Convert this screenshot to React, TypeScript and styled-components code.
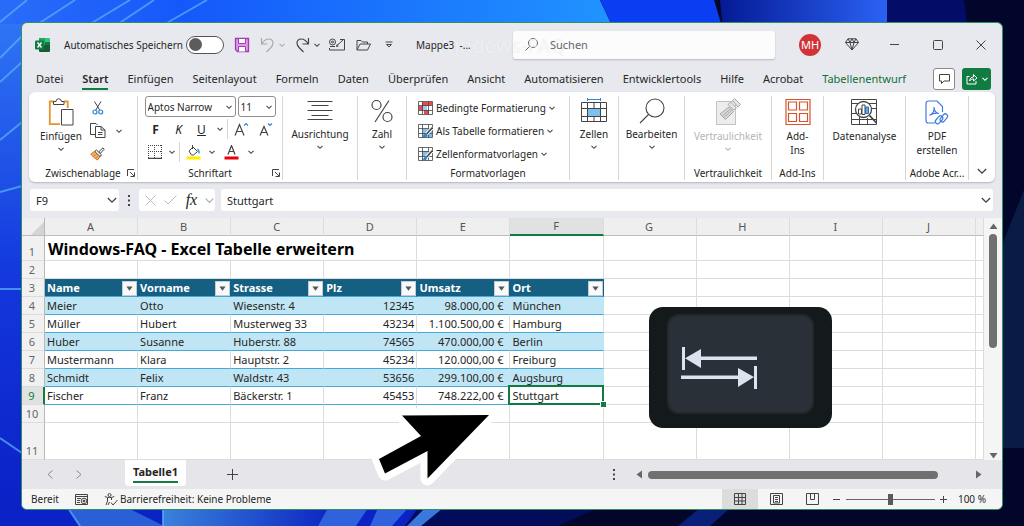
import React from "react";
import styled, { createGlobalStyle, css } from "styled-components";

const Global = createGlobalStyle`
  *, *::before, *::after { box-sizing: border-box; }
  body {
    margin: 0;
    background: #050c50;
    font-family: "Noto Sans", "Open Sans", sans-serif;
    font-size: 11px;
    color: #262626;
  }
  button, input, select {
    font: inherit;
    color: inherit;
    margin: 0;
    padding: 0;
    border: 0;
    background: none;
  }
  button { white-space: nowrap; }
  svg { display: block; flex: none; }
`;

const Desktop = styled.main`
  position: relative;
  min-height: 100vh;
  padding: 22px 21px 16px;
  overflow: hidden;
`;

const WallpaperArt = styled.svg`
  position: absolute;
  inset: 0;
  width: 100%;
  height: 100%;
`;

const Window = styled.div`
  position: relative;
  display: flex;
  flex-direction: column;
  border: 1px solid #2f8f62;
  border-radius: 6px;
  background: #e8e9ee;
  overflow: hidden;
`;

/* Title bar */

const TitleBar = styled.header`
  display: flex;
  align-items: center;
  height: 43px;
  padding-left: 13px;
`;

const QuickAccess = styled.div`
  display: flex;
  align-items: center;
  width: 478px;
`;

const AutoSave = styled.label`
  display: flex;
  align-items: center;
  justify-content: space-between;
  width: 160px;
  margin: 0 10px 0 13px;
  font-size: 10px;
  white-space: nowrap;
`;

const Toggle = styled.input`
  appearance: none;
  display: flex;
  align-items: center;
  width: 38px;
  height: 18px;
  padding: 0 2px;
  border: 1px solid #555;
  border-radius: 9px;
  background: #fff;
  &::before {
    content: "";
    width: 13px;
    height: 13px;
    border-radius: 50%;
    background: #5c5c5c;
  }
  &:checked { justify-content: flex-end; }
`;

const IconButton = styled.button<{ $w?: number; $h?: number }>`
  display: flex;
  align-items: center;
  justify-content: center;
  flex: none;
  width: ${(p) => p.$w ?? 16}px;
  height: ${(p) => p.$h ?? 18}px;
`;

const HistoryButtons = styled.div`
  display: flex;
  margin-left: 8px;
`;

const FileName = styled.span`
  position: relative;
  z-index: 1;
  margin-left: 14px;
  font-size: 10px;
  white-space: pre;
`;

const Watermark = styled.span`
  position: absolute;
  left: 414px;
  top: 9px;
  font-size: 20px;
  line-height: 28px;
  color: rgba(255, 255, 255, 0.55);
  text-shadow: 0 0 1px rgba(170, 175, 185, 0.25);
  pointer-events: none;
`;

const SearchBox = styled.label`
  display: flex;
  flex: 1;
  align-items: center;
  gap: 12px;
  height: 28px;
  margin-right: 14px;
  padding-left: 12px;
  border-radius: 3px;
  background: #fcfcfd;
  box-shadow: 0 1px 2px #b9bbc0;
  input {
    position: relative;
    z-index: 1;
    flex: 1;
    min-width: 0;
    outline: none;
    &::placeholder { color: #666; opacity: 1; }
  }
`;

const Avatar = styled.span`
  display: flex;
  align-items: center;
  justify-content: center;
  width: 22px;
  height: 22px;
  border-radius: 50%;
  background: #d13438;
  color: #fff;
`;

/* Ribbon tabs */

const TabBar = styled.nav`
  display: flex;
  align-items: center;
  height: 26px;
  padding: 0 11px 0 14px;
`;

const Tabs = styled.div`
  display: flex;
  flex: 1;
  gap: 19px;
`;

const RibbonTab = styled.button<{ $active?: boolean; $context?: boolean }>`
  height: 22px;
  padding-top: 1px;
  line-height: 19px;
  border-bottom: 2px solid transparent;
  ${(p) => p.$active && css`font-weight: 600; border-color: #107c41;`}
  ${(p) => p.$context && css`color: #0f703b;`}
`;

const CommentButton = styled(IconButton)`
  border: 1px solid #8a8a8a;
  border-radius: 3px;
  background: #fff;
`;

const ShareButton = styled(IconButton)`
  gap: 4px;
  margin-left: 7px;
  border-radius: 3px;
  background: #107c41;
  color: #fff;
`;

/* Ribbon body */

const Ribbon = styled.section`
  display: flex;
  height: 90px;
  margin: 0 7px;
  padding: 4px 0 2px;
  border-radius: 6px;
  background: #fff;
  box-shadow: 0 1px 2px #b4b6ba;
  font-size: 10px;
`;

const Group = styled.div<{ $w: number }>`
  display: flex;
  flex-direction: column;
  flex: none;
  width: ${(p) => p.$w}px;
  border-right: 1px solid #d6d6d6;
`;

const GroupBody = styled.div<{ $gap?: number; $start?: boolean }>`
  display: flex;
  flex: 1;
  align-items: flex-start;
  justify-content: ${(p) => (p.$start ? "flex-start" : "center")};
  gap: ${(p) => p.$gap ?? 0}px;
  padding-left: ${(p) => (p.$start ? 11 : 0)}px;
`;

const GroupLabel = styled.div`
  position: relative;
  height: 14px;
  line-height: 14px;
  text-align: center;
  white-space: nowrap;
`;

const Launcher = styled.button`
  position: absolute;
  right: 2px;
  top: 3px;
`;

const BigButton = styled.button<{ $muted?: boolean }>`
  display: flex;
  flex-direction: column;
  align-items: center;
  gap: 3px;
  height: 64px;
  padding-top: 2px;
  line-height: 14px;
  color: ${(p) => (p.$muted ? "#b4b4b4" : "inherit")};
`;

const Stack = styled.div<{ $gap?: number }>`
  display: flex;
  flex-direction: column;
  gap: ${(p) => p.$gap ?? 0}px;
`;

const Row = styled.div<{ $gap?: number }>`
  display: flex;
  align-items: center;
  gap: ${(p) => p.$gap ?? 0}px;
`;

const SelectFrame = styled.label<{ $w: number }>`
  display: flex;
  align-items: center;
  width: ${(p) => p.$w}px;
  height: 21px;
  padding: 0 3px 0 2px;
  border: 1px solid #8f8f8f;
  border-radius: 3px;
  select {
    appearance: none;
    flex: 1;
    min-width: 0;
    outline: none;
  }
`;

const GlyphButton = styled(IconButton)<{ $kind?: "bold" | "italic" | "underline" }>`
  font-size: 12px;
  ${(p) => p.$kind === "bold" && css`font-weight: 700;`}
  ${(p) => p.$kind === "italic" && css`font-style: italic;`}
  ${(p) => p.$kind === "underline" && css`text-decoration: underline;`}
`;

const ThinRule = styled.span`
  width: 1px;
  height: 20px;
  background: #d6d6d6;
`;

const StyleButton = styled.button`
  display: flex;
  align-items: center;
  gap: 3px;
  height: 23px;
`;

const RibbonEnd = styled.div`
  display: flex;
  flex: 1;
  align-items: flex-end;
  justify-content: center;
`;

/* Formula bar */

const FormulaBar = styled.div`
  display: flex;
  align-items: center;
  height: 36px;
  padding: 0 9px 0 8px;
`;

const Field = styled.label<{ $w?: number }>`
  display: flex;
  align-items: center;
  flex: ${(p) => (p.$w ? "none" : 1)};
  width: ${(p) => (p.$w ? `${p.$w}px` : "auto")};
  height: 22px;
  padding: 0 2px 0 6px;
  border-radius: 3px;
  background: #fff;
  input {
    flex: 1;
    min-width: 0;
    outline: none;
  }
`;

const FormulaTools = styled.div`
  display: flex;
  align-items: center;
  justify-content: space-between;
  width: 76px;
  height: 22px;
  margin-right: 6px;
  padding: 0 1px 0 5px;
  border-radius: 3px;
  background: #fff;
`;

const FxButton = styled.button`
  font-family: "Liberation Serif", serif;
  font-size: 16px;
  font-style: italic;
  line-height: 16px;
`;

/* Sheet */

const SheetArea = styled.div`
  position: relative;
  display: flex;
  background: #f5f5f5;
`;

const Grid = styled.table`
  flex: 1;
  width: 0;
  table-layout: fixed;
  border-collapse: separate;
  border-spacing: 0;
  background: #fff;
  th, td {
    padding: 1px 3px 0 2px;
    overflow: hidden;
    white-space: nowrap;
    line-height: 16px;
    font-weight: 400;
    text-align: left;
    border-right: 1px solid #dcdcdc;
    border-bottom: 1px solid #dcdcdc;
  }
`;

const Line = styled.tr<{ $h: number }>`
  height: ${(p) => p.$h}px;
`;

const ColumnHead = styled.th<{ $active?: boolean }>`
  && {
    padding-top: 0;
    text-align: center;
    color: #555;
    background: ${(p) => (p.$active ? "#dfe2e0" : "#efefef")};
    border-bottom: ${(p) => (p.$active ? "2px solid #107c41" : "1px solid #bdbdbd")};
  }
`;

const RowHead = styled.th<{ $active?: boolean }>`
  && {
    padding: 0 2px 0 0;
    text-align: center;
    vertical-align: bottom;
    color: ${(p) => (p.$active ? "#107c41" : "#666")};
    background: ${(p) => (p.$active ? "#e0e2e1" : "#f1f1f1")};
    border-right: ${(p) => (p.$active ? "2px solid #107c41" : "1px solid #b8b8b8")};
  }
`;

const Corner = styled.th`
  && {
    background: linear-gradient(135deg, #efefef 66%, #d4d4d4 67%);
    border-right-color: #b8b8b8;
    border-bottom-color: #bdbdbd;
  }
`;

const SheetTitle = styled.td`
  && {
    padding-left: 3px;
    font-size: 16px;
    font-weight: 700;
    line-height: 22px;
    color: #000;
  }
`;

const FieldHead = styled.th`
  && {
    padding-right: 0;
    color: #fff;
    font-weight: 700;
    background: #156082;
    border-right-color: #156082;
    border-bottom-color: #45a9d8;
  }
  > div {
    display: flex;
    align-items: center;
    justify-content: space-between;
  }
`;

const FilterButton = styled.button`
  display: flex;
  align-items: center;
  justify-content: center;
  width: 15px;
  height: 15px;
  border: 1px solid #c4ccd0;
  background: #f8f9fa;
  color: #555;
`;

const Data = styled.td<{ $band?: boolean; $num?: boolean; $money?: boolean; $selected?: boolean }>`
  && {
    padding-right: ${(p) => (p.$money ? 6 : 2)}px;
    text-align: ${(p) => (p.$num || p.$money ? "right" : "left")};
    border-bottom-color: #45a9d8;
    ${(p) => p.$band && css`background: #c0e6f5; border-right-color: #c0e6f5;`}
    ${(p) => p.$selected && css`position: relative; overflow: visible;`}
  }
  &::before {
    content: ${(p) => (p.$selected ? '""' : "none")};
    position: absolute;
    inset: -2px -1px -1px -2px;
    border: 2px solid #107c41;
  }
  &::after {
    content: ${(p) => (p.$selected ? '""' : "none")};
    position: absolute;
    right: -3px;
    bottom: -3px;
    width: 5px;
    height: 5px;
    background: #107c41;
    outline: 1px solid #fff;
  }
`;

const VerticalScroll = styled.div`
  display: flex;
  flex-direction: column;
  align-items: center;
  width: 18px;
  padding: 4px 0 0;
  color: #666;
`;

const VerticalThumb = styled.span`
  flex: none;
  width: 8px;
  height: 48%;
  margin: 3px 0 auto;
  border-radius: 4px;
  background: #707070;
`;

const KeyCap = styled.div`
  position: absolute;
  left: 627px;
  top: 89px;
  width: 183px;
  height: 121px;
  padding: 7px 18px 14px;
  border-radius: 14px;
  background: #14191c;
`;

const KeyFace = styled.div`
  display: flex;
  align-items: center;
  height: 100%;
  padding: 7px 0 0 12px;
  border: 2px solid #22282e;
  border-radius: 12px;
  background: #2a3038;
`;

const PointerArt = styled.svg`
  position: absolute;
  left: 348px;
  top: 187px;
  pointer-events: none;
`;

/* Bottom bars */

const SheetTabs = styled.div`
  display: flex;
  align-items: center;
  height: 29px;
  padding: 0 19px 0 21px;
  background: #e6e6ea;
`;

const SheetNav = styled.div`
  display: flex;
  gap: 15px;
`;

const SheetTab = styled.button`
  align-self: flex-start;
  height: 26px;
  width: 61px;
  margin: 0 38px 0 39px;
  border-radius: 0 0 4px 4px;
  background: #fff;
  font-weight: 700;
  span {
    display: inline-block;
    line-height: 18px;
    border-bottom: 2px solid #107c41;
  }
`;

const HorizontalScroll = styled.div`
  display: flex;
  align-items: center;
  gap: 4px;
  width: 37%;
  margin-left: 20px;
  color: #666;
`;

const HorizontalTrack = styled.span`
  display: flex;
  flex: 1;
  height: 8px;
  &::before {
    content: "";
    width: 90%;
    border-radius: 4px;
    background: #707070;
  }
`;

const StatusBar = styled.footer`
  display: flex;
  align-items: center;
  height: 20px;
  padding: 0 16px 0 9px;
  background: #f5f5f5;
  font-size: 10px;
`;

const Spacer = styled.span`
  flex: 1;
`;

const StatusItem = styled.button`
  display: flex;
  align-items: center;
  gap: 2px;
  margin-left: 16px;
`;

const ViewButton = styled(IconButton)<{ $active?: boolean }>`
  background: ${(p) => (p.$active ? "#dcdcdc" : "transparent")};
`;

const ZoomSlider = styled.input`
  appearance: none;
  width: 89px;
  height: 11px;
  margin: 0 4px;
  background: linear-gradient(#666, #666) center / 100% 1px no-repeat;
  &::-webkit-slider-thumb {
    appearance: none;
    width: 5px;
    height: 11px;
    background: #5a5a5a;
  }
`;

const ZoomValue = styled.span`
  width: 39px;
  text-align: right;
  white-space: nowrap;
`;

/* Icons */

type ArtProps = { w: number; h: number; box?: string; children: React.ReactNode };
const Art = ({ w, h, box, children }: ArtProps) => (
  <svg width={w} height={h} viewBox={box ?? `0 0 ${w} ${h}`} fill="none" stroke="#444" strokeWidth="1" aria-hidden="true">
    {children}
  </svg>
);

const Chevron = ({ size = 6, color = "#444" }: { size?: number; color?: string }) => (
  <Art w={size} h={size} box="0 0 6 6">
    <path d="M.5 1.8 3 4.300 5.500 1.800" stroke={color} strokeWidth={size > 7 ? 0.8 : 1.1} />
  </Art>
);

const Triangle = ({ turn = 0, w = 9 }: { turn?: number; w?: number }) => (
  <svg width={w} height={w} viewBox="0 0 9 9" aria-hidden="true">
    <path d="M.5 2h8L4.500 7.500z" fill="currentColor" transform={`rotate(${turn} 4.500 4.500)`} />
  </svg>
);

const ExcelLogo = () => (
  <Art w={16} h={16}>
    <g stroke="none">
      <path d="M4 1h6v7H4z" fill="#21a366" />
      <path d="M10 1h4a1 1 0 0 1 1 1v3h-5z" fill="#33c481" />
      <path d="M10 5h5v3.500h-5z" fill="#107c41" />
      <path d="M4 8h11v6a1 1 0 0 1-1 1H5a1 1 0 0 1-1-1z" fill="#185c37" />
      <rect x="0" y="3.500" width="9" height="9" rx="1" fill="#107c41" />
    </g>
    <path d="m2.500 5.500 4 5m0-5-4 5" stroke="#fff" strokeWidth="1.400" />
  </Art>
);

const SaveIcon = () => (
  <Art w={16} h={16}>
    <path d="M1.500 1.500h13v13h-11l-2-2z" fill="#dc9be6" stroke="#a33bb5" strokeWidth="1.300" />
    <path d="M4.500 1.500h7v5h-7zM4.500 14.500v-5h7v5" fill="#fff" stroke="#a33bb5" />
  </Art>
);

const UndoIcon = ({ flip, color }: { flip?: boolean; color: string }) => (
  <Art w={14} h={16}>
    <g transform={flip ? "matrix(-1 0 0 1 14 0)" : undefined} stroke={color} strokeWidth="1.200">
      <path d="M1.500 1v6h6M1.800 6.800C4 3.500 6 2 8.500 2c3 0 4.500 2 4.500 4.300 0 2-1 3.200-2.500 4.700L6.500 15" />
    </g>
  </Art>
);

const MailIcon = () => (
  <Art w={16} h={14}>
    <path d="M11 1.500h4.500v10.500H.5v-2" />
    <circle cx="3.500" cy="4" r="3" />
    <circle cx="3.500" cy="4" r="1" />
    <path d="M8 7.500 14 2M9.500 8l-2 .5.5-2M1 8.500h5" />
  </Art>
);

const FolderIcon = () => (
  <Art w={15} h={12}>
    <path d="M1 11V1.500h4L6.500 3h5v2M1 11l3-6h10.500L11.500 11z" />
  </Art>
);

const QuickMenuIcon = () => (
  <Art w={8} h={8}>
    <path d="M.5 1h7M1.500 3.500 4 6l2.500-2.500z" />
  </Art>
);

const SearchIcon = ({ size, color = "#444" }: { size: number; color?: string }) => (
  <Art w={size} h={size} box="0 0 26 26">
    <circle cx="16" cy="10" r="9" stroke={color} strokeWidth={size < 20 ? 2 : 1.1} />
    <path d="M9.500 16.500 1 25" stroke={color} strokeWidth={size < 20 ? 2 : 1.1} />
  </Art>
);

const GemIcon = () => (
  <Art w={14} h={13}>
    <path d="M3 .8h8l2.500 3.700L7 12 .5 4.500zM.5 4.500h13M3 .8l2 3.700L7 12l2-7.500 2-3.700M5 4.500 7 .8l2 3.700" />
  </Art>
);

const PasteIcon = () => (
  <Art w={26} h={28}>
    <path d="M6 3.500H1.800v22.700H12" stroke="#e8922d" strokeWidth="1.800" />
    <path d="M16 3.500h3.700V10" stroke="#e8922d" strokeWidth="1.800" />
    <path d="M5.500 6.500V3.500H8a2.700 2.700 0 0 1 5.400 0h2.600v3z" fill="#fff" />
    <path d="M13.500 11.500h11.500v15.500H13.500z" fill="#fff" />
  </Art>
);

const ScissorsIcon = () => (
  <Art w={12} h={14}>
    <path d="M2.500.5 8 9.500M9 .5l-5.500 9" />
    <circle cx="3" cy="11" r="2" stroke="#2b88d8" strokeWidth="1.200" />
    <circle cx="8.700" cy="11" r="2" stroke="#2b88d8" strokeWidth="1.200" />
  </Art>
);

const CopyIcon = () => (
  <Art w={16} h={15}>
    <path d="M5.500 11.500h-5V.5H6L7.500 2" />
    <path d="M5.500 3.500h5.500L15 7v7.500H5.500zM11 3.500V7h4M8 9.500h4.500M8 11.500h4.500" />
  </Art>
);

const BrushIcon = () => (
  <Art w={15} h={14}>
    <path d="M6 3.500 11 8.500 7.500 13C5 11.500 2.500 9.500.8 7z" fill="#f4b06a" stroke="#d9741f" />
    <path d="m3.500 9 3-1.500M5.500 11l2.500-1.500" stroke="#d9741f" strokeWidth=".8" />
    <path d="m6.500 3 5 4.800-1.500 1.700L4.800 4.500z" fill="#fff" />
    <path d="m8.800 4.800 4.200-4 1.200 1.400-3.700 4z" fill="#fff" />
  </Art>
);

const LauncherIcon = () => (
  <Art w={8} h={8}>
    <path d="M.5 7V.5H7M3 3l4 4M7.500 3.500v4h-4" />
  </Art>
);

const GrowFont = ({ down }: { down?: boolean }) => (
  <Art w={15} h={14}>
    {down ? (
      <path d="m2 13.500 4-9 4 9M3.500 10.500h5" strokeWidth="1.200" />
    ) : (
      <path d="m1 13.500 4.500-11 4.500 11M2.800 9.500h5.500" strokeWidth="1.200" />
    )}
    <path d={down ? "m10 1.500 2 2 2-2" : "m10 3.500 2-2 2 2"} stroke="#2b88d8" strokeWidth="1.200" />
  </Art>
);

const BorderIcon = () => (
  <Art w={14} h={14}>
    <path d="M0 .5h14M.5 0v14M13.500 0v14M6.500 0v14M0 6.500h14" strokeDasharray="1 1" />
    <path d="M0 13.500h14" strokeWidth="1.300" />
  </Art>
);

const FillIcon = () => (
  <Art w={15} h={15}>
    <path d="m3 6 4-4 4.500 4.500-4 3.500H5.500zM6.500 0v4" />
    <path d="M11.500 4c1.500 1 1.800 2.500 1.500 4.500" stroke="#2b88d8" strokeWidth="1.300" />
    <path d="M.5 11.500h14v3H.5z" fill="#ffee00" stroke="none" />
  </Art>
);

const FontColorIcon = () => (
  <Art w={15} h={15}>
    <path d="m4 9.500 3.500-9 3.500 9M5.200 6.500h4.600" strokeWidth="1.200" />
    <path d="M.5 11.500h14v3H.5z" fill="#e8000b" stroke="none" />
  </Art>
);

const AlignIcon = () => (
  <Art w={26} h={26}>
    <path d="M.5 3.500h25M4.500 7.500h17M.5 12.500h25M4.500 17.500h17M.5 21.500h25" />
  </Art>
);

const PercentIcon = () => (
  <Art w={24} h={26}>
    <circle cx="6.500" cy="7" r="4.500" strokeWidth="1.200" />
    <circle cx="17.500" cy="19" r="4.500" strokeWidth="1.200" />
    <path d="M19 2.500 5 24" strokeWidth="1.200" />
  </Art>
);

const TableIcon = ({ kind }: { kind: "rules" | "table" | "cell" }) => (
  <Art w={15} h={14}>
    {kind === "rules" && <path d="M4 1h6v4H4zM1 5h4v4H1zM6 9h5v4H6zM10 1h4v3h-4z" fill="#f0464c" stroke="none" />}
    {kind === "rules" && <path d="M5 5h4v4H5z" fill="#9ad0f5" stroke="none" />}
    {kind === "table" && <path d="M5 5h9v8H5z" fill="#7cc0f0" stroke="none" />}
    {kind === "cell" && <path d="M4 4h7v6H4z" fill="#7cc0f0" stroke="none" />}
    <path d="M.5.5h14v13H.5zM.5 4.500h14M.5 9.500h14M4.500.5v13M10.500.5v13" strokeWidth=".8" />
    {kind !== "rules" && (
      <>
        <path d="m14.500 3.500-6 6.500" stroke="#fff" strokeWidth="3.500" />
        <path d="m14.500 3.500-6 6.500" stroke="#444" strokeWidth="1.600" />
        <path d="M5 13.500c.5-2.500 1.500-3.500 3.500-3.500 1 2-1 3.500-3.500 3.500z" fill="#2b88d8" stroke="#2b6fb0" strokeWidth=".6" />
      </>
    )}
  </Art>
);

const CellsIcon = () => (
  <Art w={26} h={26}>
    <path d="M6.500 1.500h13M6.500 0v3M19.500 0v3" stroke="#2b88d8" />
    <path d="M6.500 10.500h13v8h-13z" fill="#7cc0f0" />
    <path d="M.5 4.500h25v19H.5zM.5 10.500h25M.5 18.500h25M6.500 4.500v19M13 4.500v6M13 18.500v5M19.500 4.500v19" />
  </Art>
);

const LabelIcon = () => (
  <Art w={26} h={28}>
    <path d="M1.500 3.500h19v23h-19z" fill="#ededed" stroke="#c2c2c2" />
    <g stroke="#a8a8a8">
      <path d="m5 16 9-7 4.500 4.500-8 8z" fill="#d9d9d9" />
      <path d="m13 6.500 2.500-2.500 6 6-2.500 2zM17.500 2.500l2-2 6 6-2.500 2.500z" fill="#e6e6e6" />
      <path d="m7.500 17.500 8-6.500M9 19.500l7.500-7" />
    </g>
  </Art>
);

const AddInsIcon = () => (
  <Art w={26} h={28}>
    <g stroke="#d8532b" strokeWidth="1.200">
      <path d="M1 1.500h24v25H1z" />
      <path d="M3.500 4h8v8h-8zM14.500 4h8v8h-8zM3.500 15.500h8v8h-8zM14.500 15.500h8v8h-8z" />
    </g>
  </Art>
);

const AnalyzeIcon = () => (
  <Art w={26} h={28}>
    <path d="M.5 1.500h25v25H.5zM.5 5.500h25M.5 15.500h6M.5 21.500h25M8.500 17v9M6.500 5.500v5M16.500 20v6M20 10.500h5.500" />
    <circle cx="12.500" cy="11.500" r="8" fill="#fff" strokeWidth="1.300" />
    <path d="M7.500 11h3v5h-3zM11 7h3v9.500h-3z" />
    <path d="M14.500 9h3v6.500h-3z" fill="#5aaef0" stroke="#2b6fb0" />
    <path d="m18.500 17.500 7 7.500" strokeWidth="1.800" />
  </Art>
);

const PdfIcon = () => (
  <Art w={25} h={28}>
    <g stroke="#3f7be0" strokeWidth="1.200">
      <path d="M11 25H4.500A2.500 2.500 0 0 1 2 22.500v-17A2.500 2.500 0 0 1 4.500 3H13l5.500 5.500V14" />
      <path d="M5.500 17.500c3-1.500 5-5 4.500-8.500M10 9c0 3.500 2 6 5 6.500M6.500 17c2.500-1.700 5-2.200 8-1.700" />
      <rect x="11.500" y="20" width="9" height="4.600" rx="2.300" transform="rotate(-50 15 23)" />
      <rect x="15.500" y="17.500" width="9" height="4.600" rx="2.300" transform="rotate(-50 20 20)" />
    </g>
  </Art>
);

const ShareIcon = () => (
  <Art w={12} h={12}>
    <g stroke="#fff">
      <path d="M3.500 3.500H1v7.500h9V8" />
      <path d="M3.500 8c.5-3 2-4 4-4V1.500L11 5 7.500 8V6C6 6 4.500 6.500 3.500 8z" />
    </g>
  </Art>
);

const KeyArrows = () => (
  <Art w={78} h={44}>
    <g fill="#dbe3ee" stroke="none">
      <path d="M1 1h3v23H1zM20 10.500h56v3.500H20zM4 12.200 20 3v19z" />
      <path d="M73 20h3v23h-3zM0 29.500h57V33H0zM73 31 57 22v19z" />
    </g>
  </Art>
);

const Wallpaper = () => (
  <WallpaperArt viewBox="0 0 1024 526" preserveAspectRatio="none" aria-hidden="true">
    <defs>
      <linearGradient id="sky" x1="0" x2="1" y1="0" y2="0">
        <stop offset="0" stopColor="#2a6cf8" />
        <stop offset=".3" stopColor="#1558fb" />
        <stop offset="1" stopColor="#2094ff" />
      </linearGradient>
      <linearGradient id="left" x1="0" x2="0" y1="0" y2="1">
        <stop offset="0" stopColor="#2f74f5" />
        <stop offset=".5" stopColor="#1338dd" />
        <stop offset="1" stopColor="#0a1fc4" />
      </linearGradient>
      <linearGradient id="fold" x1="0" x2="1" y1="0" y2="0">
        <stop offset="0" stopColor="#051a94" />
        <stop offset="1" stopColor="#2b62f4" />
      </linearGradient>
      <linearGradient id="petal" x1="0" x2="1" y1="0" y2="0">
        <stop offset="0" stopColor="#3a82dc" />
        <stop offset="1" stopColor="#0a1fc0" />
      </linearGradient>
    </defs>
    <path d="M0 0h1024v526H0z" fill="#02062a" />
    <path d="M0 0h600l14 30H0z" fill="url(#sky)" />
    <path d="M0 24h30v502H0z" fill="url(#left)" />
    <path d="M600 0h114l9 30H614z" fill="#0a3ef2" />
    <path d="M720 0h168v30H723z" fill="url(#fold)" />
    <path d="M887 0h77l4 30h-81z" fill="#030c66" />
    <path d="M1024 190v75h-40V290z" fill="#0a1b45" />
    <path d="M1000 265h24v183h-24z" fill="#0a1b45" />
    <path d="M0 500h420v26H0z" fill="#0b22c4" />
    <path d="M68 508h60l36 18H80z" fill="#2b5fd8" />
    <path d="M163 508h180l-20 18H163z" fill="url(#petal)" />
    <path d="M328 508h40l-12 18h-38zM378 508h30l-16 18h-22z" fill="#2f62dc" />
    <path d="M418 508h180l-40 18H405z" fill="#030c58" />
    <path d="M425 508h18l-22 18h-14z" fill="#3a78dd" />
    <path d="M700 508h30l-20 18h-32z" fill="#0a1f78" />
    <g stroke="#57aef6" strokeOpacity=".75" strokeWidth="2" fill="none">
      <path d="M27 0 0 22M75 0 38 24M130 0 90 24M154 0 118 24M207 0 165 24M22 36 0 58M22 62 0 82M22 122 0 140M22 186 0 192M22 289H0M22 453 0 438M68 508l12 18M163 508v18" />
    </g>
  </WallpaperArt>
);

/* Content */

const tabs = ["Datei", "Start", "Einfügen", "Seitenlayout", "Formeln", "Daten", "Überprüfen", "Ansicht", "Automatisieren", "Entwicklertools", "Hilfe", "Acrobat", "Tabellenentwurf"];
const columns = ["A", "B", "C", "D", "E", "F", "G", "H", "I", "J"];
const fields = ["Name", "Vorname", "Strasse", "Plz", "Umsatz", "Ort"];
const people = [
  ["Meier", "Otto", "Wiesenstr. 4", "12345", "98.000,00 €", "München"],
  ["Müller", "Hubert", "Musterweg 33", "43234", "1.100.500,00 €", "Hamburg"],
  ["Huber", "Susanne", "Huberstr. 88", "74565", "470.000,00 €", "Berlin"],
  ["Mustermann", "Klara", "Hauptstr. 2", "45234", "120.000,00 €", "Freiburg"],
  ["Schmidt", "Felix", "Waldstr. 43", "53656", "299.100,00 €", "Augsburg"],
  ["Fischer", "Franz", "Bäckerstr. 1", "45453", "748.222,00 €", "Stuttgart"],
];

const Blank = ({ count }: { count: number }) => (
  <>
    {Array.from({ length: count }, (_, i) => (
      <td key={i} />
    ))}
  </>
);

export default function App() {
  return (
    <Desktop>
      <Global />
      <Wallpaper />
      <Window>
        <TitleBar>
          <QuickAccess>
            <ExcelLogo />
            <AutoSave>
              Automatisches Speichern
              <Toggle type="checkbox" role="switch" />
            </AutoSave>
            <IconButton aria-label="Speichern"><SaveIcon /></IconButton>
            <HistoryButtons>
              <IconButton $w={18} aria-label="Rückgängig"><UndoIcon color="#a9a9ad" /></IconButton>
              <IconButton $w={12} aria-label="Rückgängig-Liste"><Chevron color="#a9a9ad" /></IconButton>
            </HistoryButtons>
            <HistoryButtons>
              <IconButton $w={14} aria-label="Wiederholen"><UndoIcon flip color="#444" /></IconButton>
              <IconButton $w={14} aria-label="Wiederholen-Liste"><Chevron /></IconButton>
            </HistoryButtons>
            <IconButton $w={26} aria-label="E-Mail"><MailIcon /></IconButton>
            <IconButton $w={26} aria-label="Öffnen"><FolderIcon /></IconButton>
            <IconButton $w={26} aria-label="Symbolleiste anpassen"><QuickMenuIcon /></IconButton>
            <FileName>Mappe3  -...</FileName>
          </QuickAccess>
          <SearchBox>
            <SearchIcon size={13} color="#666" />
            <input type="search" placeholder="Suchen" aria-label="Suchen" />
          </SearchBox>
          <IconButton $w={42} $h={28} aria-label="Konto"><Avatar>MH</Avatar></IconButton>
          <IconButton $w={42} $h={28} aria-label="Premium"><GemIcon /></IconButton>
          <IconButton $w={43} $h={28} aria-label="Minimieren"><Art w={9} h={9}><path d="M0 4.500h9" /></Art></IconButton>
          <IconButton $w={43} $h={28} aria-label="Maximieren"><Art w={10} h={10}><rect x=".5" y=".5" width="9" height="9" rx="1" /></Art></IconButton>
          <IconButton $w={43} $h={28} aria-label="Schließen"><Art w={10} h={10}><path d="m.5.5 9 9m0-9-9 9" /></Art></IconButton>
          <Watermark>Windows-FAQ</Watermark>
        </TitleBar>

        <TabBar>
          <Tabs>
            {tabs.map((name) => (
              <RibbonTab key={name} $active={name === "Start"} $context={name === "Tabellenentwurf"}>{name}</RibbonTab>
            ))}
          </Tabs>
          <CommentButton $w={22} $h={22} aria-label="Kommentare">
            <Art w={11} h={10}><path d="M.5.5h10v6.500H5L2.500 9.500V7h-2z" /></Art>
          </CommentButton>
          <ShareButton $w={29} $h={22} aria-label="Freigeben"><ShareIcon /><Chevron color="#fff" /></ShareButton>
        </TabBar>

        <Ribbon>
          <Group $w={109}>
            <GroupBody $gap={8} $start>
              <BigButton><PasteIcon /><span>Einfügen</span><Chevron /></BigButton>
              <Stack>
                <IconButton $h={23} aria-label="Ausschneiden"><ScissorsIcon /></IconButton>
                <Row $gap={10}>
                  <IconButton $h={23} aria-label="Kopieren"><CopyIcon /></IconButton>
                  <Chevron />
                </Row>
                <IconButton $h={23} aria-label="Format übertragen"><BrushIcon /></IconButton>
              </Stack>
            </GroupBody>
            <GroupLabel>Zwischenablage<Launcher aria-label="Zwischenablage öffnen"><LauncherIcon /></Launcher></GroupLabel>
          </Group>

          <Group $w={145}>
            <GroupBody>
              <Stack $gap={1}>
                <Row $gap={2}>
                  <SelectFrame $w={91}>
                    <select aria-label="Schriftart"><option>Aptos Narrow</option></select><Chevron />
                  </SelectFrame>
                  <SelectFrame $w={38}>
                    <select aria-label="Schriftgrad"><option>11</option></select><Chevron />
                  </SelectFrame>
                </Row>
                <Row>
                  <GlyphButton $w={22} $h={22} $kind="bold">F</GlyphButton>
                  <GlyphButton $w={24} $h={22} $kind="italic">K</GlyphButton>
                  <GlyphButton $w={22} $h={22} $kind="underline">U</GlyphButton>
                  <IconButton $w={14} $h={22} aria-label="Unterstreichungsart"><Chevron /></IconButton>
                  <ThinRule />
                  <IconButton $w={28} $h={22} aria-label="Schrift vergrößern"><GrowFont /></IconButton>
                  <IconButton $w={20} $h={22} aria-label="Schrift verkleinern"><GrowFont down /></IconButton>
                </Row>
                <Row>
                  <IconButton $w={20} $h={22} aria-label="Rahmen"><BorderIcon /></IconButton>
                  <IconButton $w={14} $h={22} aria-label="Rahmenart"><Chevron /></IconButton>
                  <ThinRule />
                  <IconButton $w={28} $h={22} aria-label="Füllfarbe"><FillIcon /></IconButton>
                  <IconButton $w={8} $h={22} aria-label="Füllfarben"><Chevron /></IconButton>
                  <IconButton $w={32} $h={22} aria-label="Schriftfarbe"><FontColorIcon /></IconButton>
                  <IconButton $w={6} $h={22} aria-label="Schriftfarben"><Chevron /></IconButton>
                </Row>
              </Stack>
            </GroupBody>
            <GroupLabel>Schriftart<Launcher aria-label="Schriftart öffnen"><LauncherIcon /></Launcher></GroupLabel>
          </Group>

          <Group $w={75}>
            <GroupBody><BigButton><AlignIcon /><span>Ausrichtung</span><Chevron /></BigButton></GroupBody>
          </Group>
          <Group $w={49}>
            <GroupBody><BigButton><PercentIcon /><span>Zahl</span><Chevron /></BigButton></GroupBody>
          </Group>

          <Group $w={163}>
            <GroupBody $start>
              <Stack>
                <StyleButton><TableIcon kind="rules" />Bedingte Formatierung<Chevron /></StyleButton>
                <StyleButton><TableIcon kind="table" />Als Tabelle formatieren<Chevron /></StyleButton>
                <StyleButton><TableIcon kind="cell" />Zellenformatvorlagen<Chevron /></StyleButton>
              </Stack>
            </GroupBody>
            <GroupLabel>Formatvorlagen</GroupLabel>
          </Group>

          <Group $w={49}>
            <GroupBody><BigButton><CellsIcon /><span>Zellen</span><Chevron /></BigButton></GroupBody>
          </Group>
          <Group $w={66}>
            <GroupBody><BigButton><SearchIcon size={26} /><span>Bearbeiten</span><Chevron /></BigButton></GroupBody>
          </Group>
          <Group $w={87}>
            <GroupBody><BigButton $muted disabled><LabelIcon /><span>Vertraulichkeit</span><Chevron color="#b4b4b4" /></BigButton></GroupBody>
            <GroupLabel>Vertraulichkeit</GroupLabel>
          </Group>
          <Group $w={52}>
            <GroupBody><BigButton><AddInsIcon /><span>Add-<br />Ins</span></BigButton></GroupBody>
            <GroupLabel>Add-Ins</GroupLabel>
          </Group>
          <Group $w={82}>
            <GroupBody><BigButton><AnalyzeIcon /><span>Datenanalyse</span></BigButton></GroupBody>
          </Group>
          <Group $w={63}>
            <GroupBody><BigButton><PdfIcon /><span>PDF<br />erstellen</span></BigButton></GroupBody>
            <GroupLabel>Adobe Acr...</GroupLabel>
          </Group>
          <RibbonEnd>
            <IconButton aria-label="Menüband reduzieren"><Chevron size={10} /></IconButton>
          </RibbonEnd>
        </Ribbon>

        <FormulaBar>
          <Field $w={89}>
            <input defaultValue="F9" aria-label="Namenfeld" />
            <Chevron size={10} />
          </Field>
          <IconButton $w={20} aria-label="Größe ändern">
            <Art w={2} h={11}><path d="M1 0v11" strokeWidth="2" strokeDasharray="2 2.500" /></Art>
          </IconButton>
          <FormulaTools>
            <IconButton $w={12} aria-label="Abbrechen"><Art w={11} h={11}><path d="m.5.5 10 10m0-10-10 10" stroke="#bdbdbd" /></Art></IconButton>
            <IconButton $w={14} aria-label="Eingeben"><Art w={13} h={10}><path d="m.5 5.500 3.500 3.500L12.500.5" stroke="#bdbdbd" /></Art></IconButton>
            <FxButton aria-label="Funktion einfügen">fx</FxButton>
            <Chevron size={9} color="#aaa" />
          </FormulaTools>
          <Field>
            <input defaultValue="Stuttgart" aria-label="Bearbeitungsleiste" />
            <Chevron size={10} />
          </Field>
        </FormulaBar>

        <SheetArea>
          <Grid>
            <colgroup>
              <col width={23} />
              {columns.map((c) => <col key={c} />)}
              <col width={8} />
            </colgroup>
            <thead>
              <Line $h={18}>
                <Corner />
                {columns.map((c) => <ColumnHead key={c} $active={c === "F"} scope="col">{c}</ColumnHead>)}
                <ColumnHead />
              </Line>
            </thead>
            <tbody>
              <Line $h={25}>
                <RowHead scope="row">1</RowHead>
                <SheetTitle colSpan={4}>Windows-FAQ - Excel Tabelle erweitern</SheetTitle>
                <Blank count={7} />
              </Line>
              <Line $h={18}>
                <RowHead scope="row">2</RowHead>
                <Blank count={11} />
              </Line>
              <Line $h={18}>
                <RowHead scope="row">3</RowHead>
                {fields.map((f) => (
                  <FieldHead key={f}>
                    <div>{f}<FilterButton aria-label={`${f} filtern`}><Triangle w={7} /></FilterButton></div>
                  </FieldHead>
                ))}
                <Blank count={5} />
              </Line>
              {people.map((person, r) => (
                <Line $h={18} key={person[0]}>
                  <RowHead scope="row" $active={r === 5}>{r + 4}</RowHead>
                  {person.map((value, c) => (
                    <Data key={c} $band={r % 2 === 0} $num={c === 3} $money={c === 4} $selected={r === 5 && c === 5}>{value}</Data>
                  ))}
                  <Blank count={5} />
                </Line>
              ))}
              <Line $h={18}>
                <RowHead scope="row">10</RowHead>
                <Blank count={11} />
              </Line>
              <Line $h={37}>
                <RowHead scope="row">11</RowHead>
                <Blank count={11} />
              </Line>
            </tbody>
          </Grid>
          <VerticalScroll>
            <Triangle turn={180} />
            <VerticalThumb />
            <Triangle />
          </VerticalScroll>
          <KeyCap>
            <KeyFace><KeyArrows /></KeyFace>
          </KeyCap>
          <PointerArt width="150" height="88" viewBox="370 405 150 88" aria-hidden="true">
            <path d="M402 415.500 489 415 427.500 478.500V451L385 473.500 379 459 421 436z" fill="#000" stroke="#fff" strokeWidth="14" strokeLinejoin="round" paintOrder="stroke" />
          </PointerArt>
        </SheetArea>

        <SheetTabs>
          <SheetNav>
            <IconButton $w={14} aria-label="Vorheriges Blatt"><Art w={6} h={9}><path d="M5.500.5 1 4.500l4.500 4" stroke="#8a8a8a" /></Art></IconButton>
            <IconButton $w={14} aria-label="Nächstes Blatt"><Art w={6} h={9}><path d="m.5.5 4.500 4-4.500 4" stroke="#8a8a8a" /></Art></IconButton>
          </SheetNav>
          <SheetTab><span>Tabelle1</span></SheetTab>
          <IconButton aria-label="Neues Blatt"><Art w={11} h={11}><path d="M5.500 0v11M0 5.500h11" /></Art></IconButton>
          <Spacer />
          <Art w={2} h={11}><path d="M1 0v11" strokeWidth="2" strokeDasharray="2 2.500" /></Art>
          <HorizontalScroll>
            <Triangle turn={90} />
            <HorizontalTrack />
            <Triangle turn={-90} />
          </HorizontalScroll>
        </SheetTabs>

        <StatusBar>
          Bereit
          <StatusItem aria-label="Makro aufzeichnen">
            <Art w={13} h={11}><path d="M.5.5h12v10H.5zM.5 2.500h12M2 4.500h4M2 6.500h3M2 8.500h3" /><circle cx="9" cy="7" r="2.800" fill="#fff" /><circle cx="9" cy="7" r="1" fill="#444" /></Art>
          </StatusItem>
          <StatusItem>
            <Art w={14} h={13}><circle cx="5.500" cy="2" r="1.500" /><path d="M.8 3.500c3 1.500 6.500 1.500 9.500 0M3.500 5v3l-1.500 4M7.500 5v2M4 12l1.500-3M7 9.500l2 2.500 4.500-5" /></Art>
            Barrierefreiheit: Keine Probleme
          </StatusItem>
          <Spacer />
          <ViewButton $w={36} $h={20} $active aria-label="Normal"><Art w={12} h={12}><path d="M.5.5h11v11H.5zM.5 4.500h11M.5 8h11M4.500.5v11M8 .5v11" /></Art></ViewButton>
          <ViewButton $w={36} $h={20} aria-label="Seitenlayout"><Art w={13} h={12}><path d="M.5.5h12v11H.5zM3.500 2.500h6v7.500h-6zM5 4.500h3M5 6.500h3M5 8.500h3" /></Art></ViewButton>
          <ViewButton $w={36} $h={20} aria-label="Umbruchvorschau"><Art w={13} h={12}><path d="M.5.5h12v11H.5zM4.500.5v6h4v-6" /></Art></ViewButton>
          <IconButton $w={12} aria-label="Verkleinern"><Art w={7} h={7}><path d="M0 3.500h7" /></Art></IconButton>
          <ZoomSlider type="range" min={10} max={190} defaultValue={100} aria-label="Zoom" />
          <IconButton $w={8} aria-label="Vergrößern"><Art w={7} h={7}><path d="M0 3.500h7M3.500 0v7" /></Art></IconButton>
          <ZoomValue>100 %</ZoomValue>
        </StatusBar>
      </Window>
    </Desktop>
  );
}
